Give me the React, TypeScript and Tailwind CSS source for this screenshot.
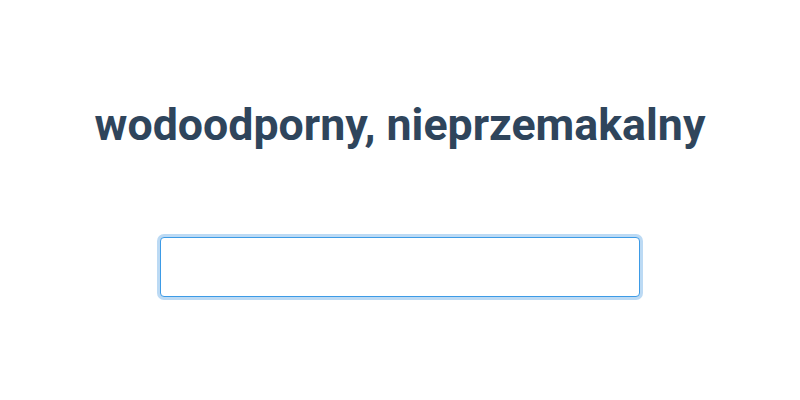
import React from "react";

export default function App() {
  return (
    <div className="w-[800px] h-[400px] bg-white flex flex-col items-center" style={{ fontFamily: "Roboto, 'Noto Sans', sans-serif" }}>
      <h1 className="mt-[98px] text-[44.7px] leading-[54px] font-bold text-[#2f455c]">wodoodporny, nieprzemakalny</h1>
      <input
        type="text"
        className="mt-[85px] w-[480px] h-[60px] rounded-[4px] border border-[#3d9be6] outline-none ring-[3px] ring-[#bcdaf4] bg-white px-3 text-[20px]"
      />
    </div>
  );
}
